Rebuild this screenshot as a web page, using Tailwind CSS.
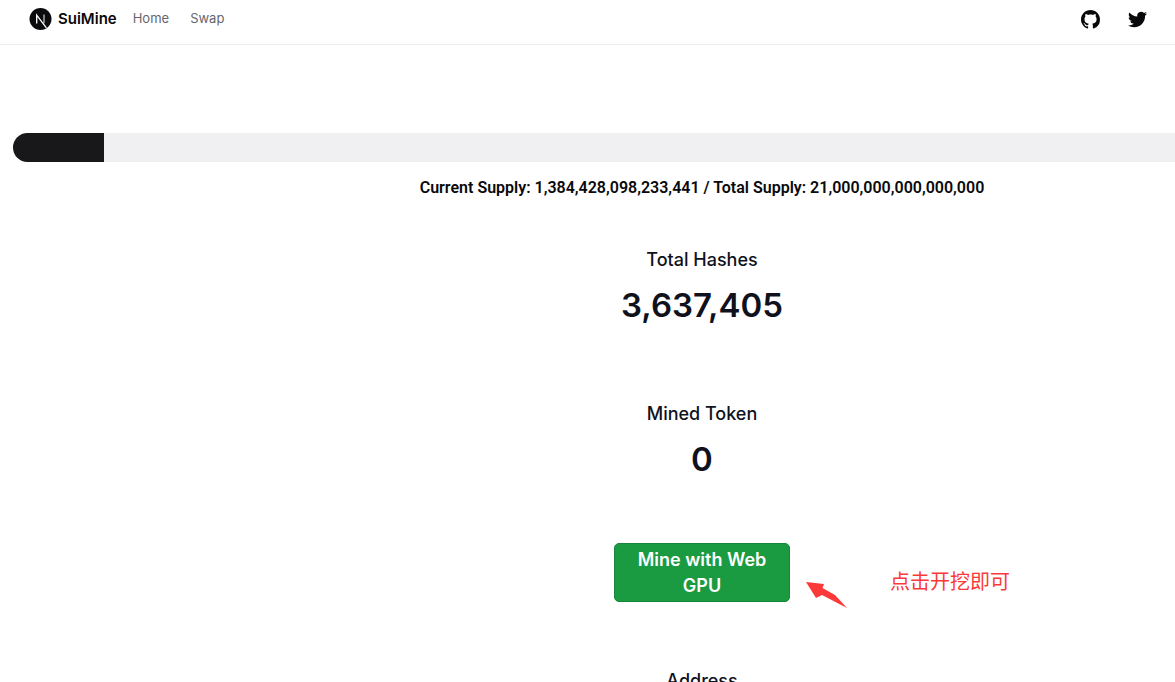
<!DOCTYPE html>
<html lang="en">
<head>
<meta charset="utf-8">
<meta name="viewport" content="width=device-width, initial-scale=1">
<title>SuiMine</title>
<script src="https://cdn.jsdelivr.net/npm/@tailwindcss/browser@4"></script>
</head>
<body class="h-screen overflow-hidden bg-white font-['Inter','Noto_Sans_CJK_SC',sans-serif] text-[#09090b]">
<header class="flex h-[45px] items-center justify-between border-b border-[#ececee] pr-7 pl-[29px] pb-[6px]">
  <nav class="flex items-center text-[13px]">
    <a href="#" class="mr-4 flex items-center gap-[6px] text-[15px] font-semibold">
      <svg class="size-[23px]" viewBox="0 0 23 23" aria-hidden="true">
        <circle cx="11.5" cy="11" r="11" fill="#0b0b0d"/>
        <path d="M7.7 15.6V7.1L17.4 19.8" fill="none" stroke="#fff" stroke-width="1.3"/>
        <path d="M15 6.6v8.6" stroke="#fff" stroke-opacity=".75" stroke-width="1.3"/>
      </svg>
      <span>SuiMine</span>
    </a>
    <a href="#" class="mr-[21px] text-[#66666e]">Home</a>
    <a href="#" class="text-[#66666e]">Swap</a>
  </nav>
  <div class="flex items-center gap-7">
    <a href="#" aria-label="GitHub">
      <svg class="size-[19px]" viewBox="0 0 16 16" fill="currentColor" aria-hidden="true"><path d="M8 0C3.58 0 0 3.58 0 8c0 3.54 2.29 6.53 5.47 7.59.4.07.55-.17.55-.38 0-.19-.01-.82-.01-1.49-2.01.37-2.53-.49-2.69-.94-.09-.23-.48-.94-.82-1.13-.28-.15-.68-.52-.01-.53.63-.01 1.08.58 1.23.82.72 1.21 1.87.87 2.33.66.07-.52.28-.87.51-1.07-1.78-.2-3.64-.89-3.64-3.95 0-.87.31-1.59.82-2.15-.08-.2-.36-1.02.08-2.12 0 0 .67-.21 2.2.82.64-.18 1.32-.27 2-.27s1.36.09 2 .27c1.53-1.04 2.2-.82 2.2-.82.44 1.1.16 1.92.08 2.12.51.56.82 1.27.82 2.15 0 3.07-1.87 3.75-3.65 3.95.29.25.54.73.54 1.48 0 1.07-.01 1.93-.01 2.2 0 .21.15.46.55.38A8.01 8.01 0 0 0 16 8c0-4.42-3.58-8-8-8z"/></svg>
    </a>
    <a href="#" aria-label="Twitter">
      <svg class="size-[19px]" viewBox="0 0 24 24" fill="currentColor" aria-hidden="true"><path d="M23.953 4.57a10 10 0 01-2.825.775 4.958 4.958 0 002.163-2.723c-.951.555-2.005.959-3.127 1.184a4.92 4.92 0 00-8.384 4.482C7.69 8.095 4.067 6.13 1.64 3.162a4.822 4.822 0 00-.666 2.475c0 1.71.87 3.213 2.188 4.096a4.904 4.904 0 01-2.228-.616v.06a4.923 4.923 0 003.946 4.827 4.996 4.996 0 01-2.212.085 4.936 4.936 0 004.604 3.417 9.867 9.867 0 01-6.102 2.105c-.39 0-.779-.023-1.17-.067a13.995 13.995 0 007.557 2.209c9.053 0 13.998-7.496 13.998-13.985 0-.21 0-.42-.015-.63A9.935 9.935 0 0024 4.59z"/></svg>
    </a>
  </div>
</header>
<!-- The content column is wider than the window and runs off its right edge -->
<main class="-mr-[216px] ml-[13px] flex flex-col items-center pt-[88px] text-center">
  <div role="progressbar" aria-label="Supply" aria-valuenow="6.6" aria-valuemin="0" aria-valuemax="100" class="h-[29px] w-full overflow-hidden rounded-full bg-[#f0f0f2]">
    <div class="h-full bg-[#18181b]" style="width:6.6%"></div>
  </div>
  <p class="mt-[14px] font-[Roboto,sans-serif] text-base leading-6 font-semibold">Current Supply: 1,384,428,098,233,441 / Total Supply: 21,000,000,000,000,000</p>
  <section class="mt-[47px] text-[#0f121c]">
    <h2 class="text-lg leading-[26px] font-medium">Total Hashes</h2>
    <p class="mt-[11px] text-[33px] leading-[42px] font-semibold">3,637,405</p>
  </section>
  <section class="mt-[75px] text-[#0f121c]">
    <h2 class="text-lg leading-[26px] font-medium">Mined Token</h2>
    <p class="mt-[11px] text-[33px] leading-[42px] font-semibold">0</p>
  </section>
  <div class="relative mt-[63px]">
    <button type="button" class="block w-44 rounded-[5px] border border-[#15863b] bg-[#1a9a41] px-4 pt-[3px] pb-[2px] text-lg leading-[26px] font-semibold text-white">Mine with Web GPU</button>
    <div class="absolute top-[39px] left-[192px] flex text-[#fb3938]">
      <svg class="h-[27px] w-[41px] shrink-0" viewBox="0 0 41 27" fill="currentColor" aria-hidden="true"><path d="M0 0L18 2L16.5 6L29 13L41 26L16 13L10 16Z"/></svg>
      <p class="-mt-[15px] ml-[43px] text-xl leading-[30px] font-normal whitespace-nowrap" lang="zh-CN">点击开挖即可</p>
    </div>
  </div>
  <h2 class="mt-[66px] text-lg leading-[26px] font-medium text-[#0f121c]">Address</h2>
</main>
</body>
</html>
